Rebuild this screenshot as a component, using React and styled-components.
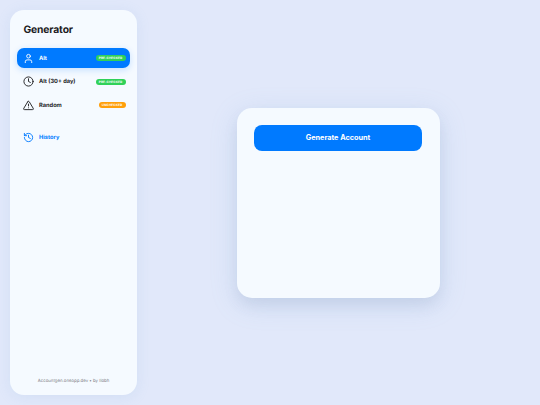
import React from "react";
import styled, { createGlobalStyle } from "styled-components";

const Global = createGlobalStyle`
  html, body { margin: 0; padding: 0; height: 100%; }
  body { background: #e1e8fa; font-family: Inter, "Liberation Sans", sans-serif; text-rendering: geometricPrecision; }
  * { box-sizing: border-box; }
`;
const Page = styled.div`
  width: 540px; height: 405px; display: flex; padding: 10px 0 10px 10px; overflow: hidden;
  background: #e1e8fa;
`;
const Sidebar = styled.aside`
  width: 127px; height: 385px; flex: none; display: flex; flex-direction: column;
  background: #f5faff; border-radius: 14px; padding: 12.6px 7px 10px;
  box-shadow: 0 2px 14px rgba(120,170,210,.14);
`;
const Title = styled.h1`
  margin: 0 0 10.4px; padding-left: 6.5px; font-size: 10.3px; line-height: 15px; font-weight: 700;
  letter-spacing: -.14px; color: #1d1d1f;
`;
const Nav = styled.nav`display: flex; flex-direction: column; gap: 3px;`;
const Item = styled.div`
  height: 20.5px; display: flex; align-items: center; gap: 5px; padding: 0 4.5px 0 6px; border-radius: 7px;
  font-size: 5.7px; font-weight: 700;
  margin-top: ${p => p.$gap || 0}px;
  color: ${p => p.$active ? "#ffffff" : p.$link ? "#007aff" : "#1d1d1f"};
  background: ${p => p.$active ? "#007aff" : "transparent"};
  box-shadow: ${p => p.$active ? "0 2px 7px rgba(0,122,255,.2)" : "none"};
`;
const Label = styled.span`flex: 1; white-space: nowrap;`;
const Icon = styled.svg`
  width: 11px; height: 11px; flex: none; fill: none; stroke: currentColor; stroke-width: 2;
  stroke-linecap: round; stroke-linejoin: round;
`;
const Badge = styled.span`
  flex: none; height: 6px; padding: 0 3.2px; border-radius: 3px; display: flex; align-items: center;
  font-size: 3.05px; font-weight: 700; letter-spacing: .12px; color: #fff; white-space: nowrap;
  background: ${p => p.$warn ? "#ff9f0a" : "#30d158"};
`;
const Footer = styled.footer`
  margin-top: auto; text-align: center; font-size: 4.35px; line-height: 7px; color: #86868b; white-space: nowrap;
`;
const Main = styled.main`flex: 1; display: flex; align-items: center; justify-content: center;`;
const Card = styled.section`
  width: 203px; height: 190px; padding: 17px; background: #f5faff; border-radius: 15px;
  box-shadow: 0 8px 14px rgba(90,100,150,.1), 0 6px 28px rgba(120,170,210,.2);
`;
const Button = styled.button`
  display: block; width: 168px; height: 26px; border: 0; border-radius: 8px; background: #007aff; color: #fff;
  font-family: inherit; font-size: 7.3px; font-weight: 700; padding: 0 0 1px;
`;

const User = () => <Icon viewBox="0 0 24 24"><path d="M19 21v-2a4 4 0 0 0-4-4H9a4 4 0 0 0-4 4v2" /><circle cx="12" cy="7" r="4" /></Icon>;
const Clock = () => <Icon viewBox="0 0 24 24"><circle cx="12" cy="12" r="10" /><path d="M12 6v6l4 2" /></Icon>;
const Warn = () => <Icon viewBox="0 0 24 24"><path d="M10.3 3.9 1.8 18a2 2 0 0 0 1.7 3h17a2 2 0 0 0 1.7-3L13.7 3.9a2 2 0 0 0-3.4 0z" /><path d="M12 9v4" /><path d="M12 17h.01" /></Icon>;
const History = () => <Icon viewBox="0 0 24 24"><path d="M3 12a9 9 0 1 0 9-9 9.75 9.75 0 0 0-6.74 2.74L3 8" /><path d="M3 3v5h5" /><path d="M12 7v5l4 2" /></Icon>;

export default function App() {
  return (
    <Page>
      <Global />
      <Sidebar>
        <Title>Generator</Title>
        <Nav>
          <Item $active><User /><Label>Alt</Label><Badge>PRE-CHECKED</Badge></Item>
          <Item><Clock /><Label>Alt (30+ day)</Label><Badge>PRE-CHECKED</Badge></Item>
          <Item><Warn /><Label>Random</Label><Badge $warn>UNCHECKED</Badge></Item>
          <Item $link $gap={9}><History /><Label>History</Label></Item>
        </Nav>
        <Footer>Accountgen.oneapp.dev • by Ilobh</Footer>
      </Sidebar>
      <Main>
        <Card><Button>Generate Account</Button></Card>
      </Main>
    </Page>
  );
}
